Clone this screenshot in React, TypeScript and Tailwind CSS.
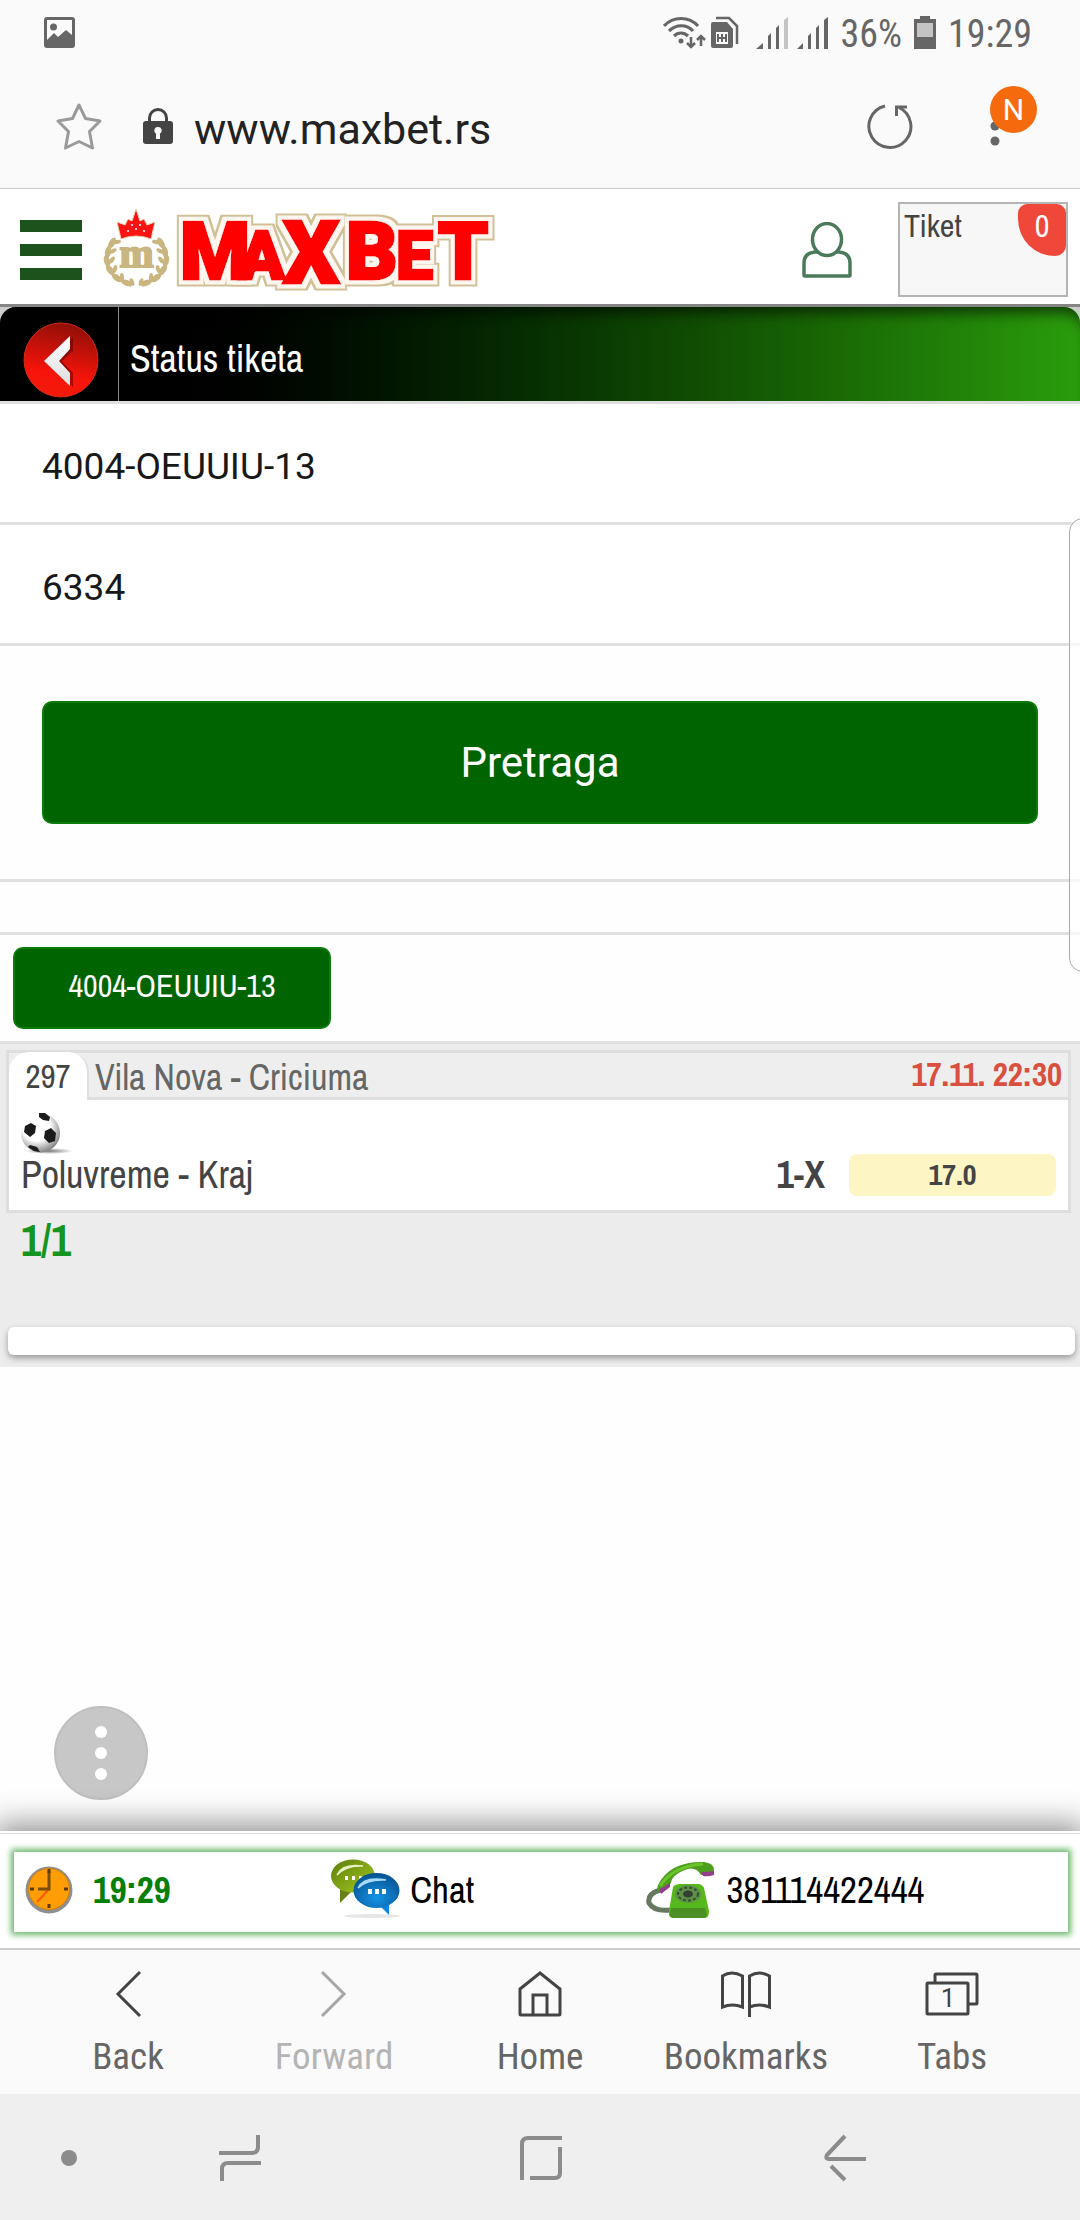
import React, { useState } from "react";

const narrow = "font-['Archivo_Narrow','Liberation_Sans_Narrow','Liberation_Sans',sans-serif]";
const condensed = "font-['Roboto_Condensed','Roboto',sans-serif]";

const StatusBar = () => (
    <div className="flex h-16 items-center justify-between pt-1 pl-[44px] pr-12 text-[#666]">
        <svg width="31" height="31" viewBox="0 0 31 31" className="-mt-1" fill="currentColor">
            <path fillRule="evenodd" d="M3 0h25a3 3 0 0 1 3 3v25a3 3 0 0 1-3 3H3a3 3 0 0 1-3-3V3a3 3 0 0 1 3-3zm0 3v20l7-7 4 4 8-7 6 5V3z" />
            <circle cx="9.500" cy="10" r="3.500" />
        </svg>
        <div className="flex items-center">
            <svg width="166" height="36" viewBox="0 0 166 36" fill="none" stroke="currentColor">
                <g strokeWidth="3.200">
                    <path d="M1 10c9-10 25-10 34 0M6 15c7-7 18-7 24 0M11 20c4-4 10-4 14 0" />
                </g>
                <circle cx="18" cy="25" r="2.500" fill="currentColor" stroke="none" />
                <path strokeWidth="2.500" d="M28 21v10m-4-4 4 4 4-4M38 30V20m-4 4 4-4 4 4" />
                <path strokeWidth="2.500" d="M53 2h13l8 8v18" />
                <path fill="currentColor" stroke="none" fillRule="evenodd" d="M50 6h14l6 7v17a2 2 0 0 1-2 2H50a2 2 0 0 1-2-2V8a2 2 0 0 1 2-2zm3 10v12h12V16z" />
                <path strokeWidth="2" d="M55 18v8m4-8v8m4-8v8m-8-4h8" />
                <path fill="currentColor" stroke="none" d="M93 33h7v-6zM105 33V20l3-3v16zM113 33V12l3-3v24zM134 33h6v-6zM145 33V20l3-3v16zM153 33V12l3-3v24zM161 33V4l4-3v32z" />
                <path fill="#c4c4c4" stroke="none" d="M121 33V4l4-3v32z" />
            </svg>
            <span className={`ml-3 text-[38px] leading-[48px] ${condensed}`}>36%</span>
            <svg width="22" height="33" viewBox="0 0 22 33" className="mx-3 -mt-1">
                <path fill="#666" d="M6 0h10v3h6v30H0V3h6z" />
                <path fill="#c4c4c4" d="M3 7h16v14H3z" />
            </svg>
            <span className={`text-[38px] leading-[48px] ${condensed}`}>19:29</span>
        </div>
    </div>
);

const AddressBar = () => (
    <div className="flex h-[125px] items-center border-b border-[#c8c8c8] pl-14 pr-11 text-[#666]">
        <button aria-label="Bookmark">
            <svg width="46" height="48" viewBox="0 0 46 48" fill="none" stroke="#9a9a9a" strokeWidth="3" strokeLinejoin="round">
                <path d="m23 3 6.500 13.500L44 19 33.500 29.500 36.500 46 23 39.500 9.500 46l3-16.500L2 19l14.500-2.500z" />
            </svg>
        </button>
        <svg width="30" height="36" viewBox="0 0 30 36" className="ml-[41px]">
            <path d="M6.500 14v-4a8.500 8.500 0 0 1 17 0v4" fill="none" stroke="#444" strokeWidth="3" />
            <rect y="13" width="30" height="23" rx="3" fill="#444" />
            <path d="M15 19a3.500 3.500 0 0 1 2 6.500V31h-4v-5.500a3.500 3.500 0 0 1 2-6.500z" fill="#fafafa" />
        </svg>
        <span className="ml-[21px] pt-1.5 text-[43px] leading-[52px] text-[#222] font-['Roboto',sans-serif]">www.maxbet.rs</span>
        <button aria-label="Reload" className="ml-auto">
            <svg width="48" height="48" viewBox="0 0 48 48" fill="none" stroke="currentColor" strokeWidth="3">
                <path d="M19 4a21 21 0 1 0 14 1.500" />
                <path d="M30.500 14V5H41" />
            </svg>
        </button>
        <button aria-label="More options" className="relative ml-[74px]">
            <svg width="48" height="64" viewBox="0 0 48 64" fill="currentColor" className="-mt-4">
                <circle cx="7" cy="40" r="4.500" />
                <circle cx="7" cy="55" r="4.500" />
            </svg>
            <span className="absolute -top-4 left-0.5 size-[47px] rounded-full bg-[#f66a0e] text-center text-[30px] leading-[48px] text-white font-['Roboto',sans-serif]">N</span>
        </button>
    </div>
);

const MaxbetLogo = () => (
    <svg width="400" height="92" viewBox="100 206 400 92" className="overflow-visible">
        <defs>
            <filter id="outline" x="-5%" y="-20%" width="110%" height="140%">
                <feMorphology in="SourceAlpha" operator="dilate" radius="6" result="wide" />
                <feFlood floodColor="#cfc096" />
                <feComposite in2="wide" operator="in" result="gold" />
                <feMorphology in="SourceAlpha" operator="dilate" radius="4" result="mid" />
                <feFlood floodColor="#fff6f0" />
                <feComposite in2="mid" operator="in" result="white" />
                <feMerge>
                    <feMergeNode in="gold" />
                    <feMergeNode in="white" />
                    <feMergeNode in="SourceGraphic" />
                </feMerge>
            </filter>
        </defs>
        <path fill="#fa1414" stroke="#e8cfae" strokeWidth="1" d="m121 241-4-17 8 3 3-6 4 2 4-12 4 12 4-2 3 6 8-3-4 17q-15-6-30 0z" />
        <g fill="#fff">
            <circle cx="128" cy="233" r="1" /><circle cx="136" cy="231" r="1" /><circle cx="144" cy="233" r="1" />
            <circle cx="132" cy="227" r="1" /><circle cx="140" cy="227" r="1" />
        </g>
        <g fill="#c9b57f">
            {[[112, 245, 30], [108, 254, 10], [107, 263, -15], [110, 272, -35], [117, 280, -55], [127, 285, -70]].map(([x, y, r]) => (
                <g key={y}>
                    <ellipse cx={x} cy={y} rx="3" ry="6" transform={`rotate(${r} ${x} ${y})`} />
                    <ellipse cx={x + 5} cy={y - 1} rx="2" ry="4" transform={`rotate(${r + 50} ${x + 5} ${y - 1})`} />
                    <ellipse cx={273 - x} cy={y} rx="3" ry="6" transform={`rotate(${-r} ${273 - x} ${y})`} />
                    <ellipse cx={268 - x} cy={y - 1} rx="2" ry="4" transform={`rotate(${-r - 50} ${268 - x} ${y - 1})`} />
                </g>
            ))}
            <text x="136.500" y="269" textAnchor="middle" fontSize="41" fontWeight="700" stroke="#c9b57f" strokeWidth="2" fontFamily="Liberation Serif, serif">m</text>
        </g>
        <g filter="url(#outline)" fill="#fe0000" stroke="#fe0000" strokeWidth="3" fontWeight="900" fontFamily="Roboto, sans-serif">
            <text y="281">
                <tspan x="180" fontSize="80" fontFamily="Liberation Sans Narrow, Roboto, sans-serif">M</tspan>
                <tspan x="239" fontSize="67">A</tspan>
                <tspan x="283" y="285" fontSize="88">X</tspan>
                <tspan x="346" y="281" fontSize="80">B</tspan>
                <tspan x="396" fontSize="66">E</tspan>
                <tspan x="438" fontSize="80">T</tspan>
            </text>
        </g>
    </svg>
);

const Header = () => (
    <header className="flex h-[118px] items-center border-b-[3px] border-[#858585] bg-white pt-1.5 pr-3 pl-5">
        <button aria-label="Menu" className="flex w-[62px] flex-col gap-3">
            <span className="h-3 bg-[#1c521c]" />
            <span className="h-3 bg-[#1c521c]" />
            <span className="h-3 bg-[#1c521c]" />
        </button>
        <a href="#home" aria-label="MaxBet" className="ml-[18px]">
            <MaxbetLogo />
        </a>
        <button aria-label="Profile" className="ml-auto">
            <svg width="50" height="56" viewBox="0 0 50 56" fill="none" stroke="#4a7a59" strokeWidth="3.500">
                <ellipse cx="25" cy="17.500" rx="14.500" ry="16" />
                <path d="M16 30H13q-11 1-11 11v12q0 1 1 1h44q1 0 1-1V41q0-10-11-11h-3" />
            </svg>
        </button>
        <button className={`ml-[46px] flex h-[95px] w-[170px] items-start justify-between border-2 border-[#b4b4b4] bg-[#f7f7f7] pl-1 text-[32px] leading-[44px] text-[#444] ${narrow}`}>
            Tiket
            <span className="h-[52px] w-12 rounded-[10px_10px_12px_40px] bg-[#ef483a] text-center text-white">0</span>
        </button>
    </header>
);

const TitleBar = () => (
    <div className="border-b-[3px] border-[#dedede] bg-[#ccc]">
        <div className="flex h-[94px] items-stretch rounded-t-2xl bg-linear-to-r from-black from-10% to-[#2a9d0c] shadow-[inset_0_14px_14px_-8px_rgba(0,0,0,0.6)]">
            <button aria-label="Nazad" className="flex w-[119px] items-center justify-center border-r border-[#888] pt-3 pl-1">
                <svg width="76" height="76" viewBox="0 0 76 76">
                    <defs>
                        <linearGradient id="red" x1="0.600" y1="0" x2="0.400" y2="1">
                            <stop offset="0" stopColor="#8d0f08" />
                            <stop offset="0.700" stopColor="#f8140a" />
                            <stop offset="1" stopColor="#f01a0a" />
                        </linearGradient>
                        <linearGradient id="silver" x1="0" y1="0" x2="0" y2="1">
                            <stop offset="0" stopColor="#fff" />
                            <stop offset="1" stopColor="#ddd" />
                        </linearGradient>
                    </defs>
                    <circle cx="38" cy="38" r="37" fill="url(#red)" stroke="#d42a18" strokeWidth="1" />
                    <path d="M50 15v14L39 39l11 12v14L23 40z" fill="#500" opacity="0.500" />
                    <path d="M47 14v13L36 39l11 12v13L21 39z" fill="url(#silver)" />
                </svg>
            </button>
            <h1 className={`self-center pl-[11px] pt-2.5 text-[38px] leading-[44px] text-white ${narrow}`}>Status tiketa</h1>
        </div>
    </div>
);

const SoccerBall = () => (
    <svg width="52" height="42" viewBox="0 0 52 42">
        <defs>
            <radialGradient id="ball" cx="0.400" cy="0.350" r="0.700">
                <stop offset="0.500" stopColor="#fff" />
                <stop offset="1" stopColor="#777" />
            </radialGradient>
            <radialGradient id="ballShadow">
                <stop offset="0" stopColor="#777" />
                <stop offset="1" stopColor="#fff" />
            </radialGradient>
        </defs>
        <ellipse cx="28" cy="39" rx="24" ry="3" fill="url(#ballShadow)" />
        <circle cx="19.500" cy="21" r="19.500" fill="url(#ball)" />
        <path fill="#1c1c1c" d="m18 1 6 0 5 4-1 4-6-1-4-3zM4 14l6-3 5 3-1 7-5 4-6-5zM24 19l6-3 5 5-1 8-6 2-5-5zM9 33l7 2 3 5-6-1-6-4z" />
    </svg>
);

interface TicketMatch {
    id: string;
    teams: string;
    date: string;
    game: string;
    tip: string;
    odds: string;
}

const matches: TicketMatch[] = [
    { id: "297", teams: "Vila Nova - Criciuma", date: "17.11. 22:30", game: "Poluvreme - Kraj", tip: "1-X", odds: "17.0" },
];

const MatchCard: React.FC<{ match: TicketMatch }> = ({ match }) => (
    <div className="border-[3px] border-[#dedede] bg-white text-[#444]">
        <div className="flex h-[47px] items-stretch border-b-[3px] border-[#e0e0e0] bg-[#eee]">
            <span className="-mt-px -mb-[3px] w-20 rounded-t-[20px] border-r-2 border-[#dedede] bg-white pt-2 text-center text-[33px] leading-[33px]">{match.id}</span>
            <span className="pl-1.5 text-[36px] leading-[48px] text-[#666]">{match.teams}</span>
            <span className="ml-auto pr-1.5 text-[33px] leading-[42px] font-bold text-[#d94f40]">{match.date}</span>
        </div>
        <div className="px-3 pt-3 pb-3.5">
            <SoccerBall />
            <div className="flex items-center">
                <span className="text-[38px] leading-[40px]">{match.game}</span>
                <span className="ml-auto text-[38px] leading-[40px] font-bold">{match.tip}</span>
                <span className="ml-6 h-[42px] w-[207px] rounded-lg bg-[#fdf6c4] text-center text-[30px] leading-[40px] font-bold">{match.odds}</span>
            </div>
        </div>
    </div>
);

const ClockIcon = () => (
    <svg width="48" height="48" viewBox="0 0 48 48">
        <circle cx="24" cy="24" r="23.500" fill="#8f8f8f" />
        <circle cx="24" cy="23" r="20.500" fill="#fe9d06" stroke="#d98200" strokeWidth="1" />
        <path d="M24 23 12 36" stroke="#ff5a00" strokeWidth="2" />
        <path d="M24 5v18H13" fill="none" stroke="#7a4d05" strokeWidth="3" />
        <path d="M24 38v4M5 23h4M39 23h4M24 3v4" stroke="#5f3c05" strokeWidth="3" />
    </svg>
);

const ChatIcon = () => (
    <svg width="70" height="62" viewBox="0 0 70 62">
        <defs>
            <linearGradient id="olive" x1="0" y1="0" x2="1" y2="1">
                <stop offset="0" stopColor="#5c7d0c" />
                <stop offset="1" stopColor="#a6cc20" />
            </linearGradient>
            <radialGradient id="blue" cx="0.500" cy="0.700" r="0.700">
                <stop offset="0" stopColor="#1593e6" />
                <stop offset="1" stopColor="#06508f" />
            </radialGradient>
        </defs>
        <ellipse cx="42" cy="57" rx="28" ry="2" fill="#e6e6e6" />
        <path d="M10 30v14l12-12z" fill="#667f18" />
        <ellipse cx="23" cy="17" rx="22" ry="16.500" fill="url(#olive)" />
        <path d="M7 16Q12 4 33 7 16 6 7 16z" fill="#e8f2c0" stroke="#e8f2c0" strokeWidth="1.500" />
        <path d="M15 17h3v4h-3zM22 17h3v4h-3zM29 17h3v3h-3z" fill="#fff" />
        <path d="M49 46l10 10V44z" fill="#0e86dd" />
        <ellipse cx="46.500" cy="31.500" rx="23" ry="17.500" fill="url(#blue)" />
        <path d="M28 29Q34 17 56 21 37 20 28 29z" fill="#a9daf8" stroke="#a9daf8" strokeWidth="1.500" />
        <path d="M38 30h4v5h-4zM45 30h4v5h-4zM52 30h4v5h-4z" fill="#fff" />
    </svg>
);

const PhoneIcon = () => (
    <svg width="70" height="58" viewBox="0 0 70 58">
        <path d="M14 29Q1 33 3 42q5 9 22 7" fill="none" stroke="#66785f" strokeWidth="5" />
        <path d="M27 26q2-3 7-3h18q4 0 6 4l5 23q0 7-4 7H27q-5 0-4-7z" fill="#56b81c" />
        <path d="M25 47h34l2 7q-1 3-3 3H27q-4-1-3-5z" fill="#4c8f22" />
        <ellipse cx="42" cy="33" rx="13" ry="9" fill="#5f8f4b" />
        <ellipse cx="42" cy="33" rx="10" ry="6.500" fill="none" stroke="#2f5427" strokeWidth="2" strokeDasharray="3 2" />
        <ellipse cx="42" cy="33" rx="5" ry="3.500" fill="#333f30" />
        <path d="M12 24Q24 0 58 1q10 1 10 8v5H55Q50 6 42 8 26 13 25 22L14 31q-4-2-2-7z" fill="#4f9f1f" />
        <path d="M14 25Q27 5 57 3" fill="none" stroke="#6cc42b" strokeWidth="3" />
        <path d="M55 11q6 0 13-1v4q-6 2-11 1zM13 28q7-2 11-7v5l-9 7z" fill="#93408c" />
    </svg>
);

const BottomBar = () => (
    <footer className={`relative z-10 border-t-2 border-white bg-white text-[37px] leading-[44px] text-black shadow-[0_0_30px_6px_rgba(0,0,0,0.45)] ${narrow}`}>
        <div className="border-t border-[#ddd] pt-[18px] pr-3 pb-4 pl-3.5">
            <div className="grid h-[80px] grid-cols-[30fr_30fr_40fr] items-center bg-white pb-1 shadow-[0_0_6px_3px_#6db96d]">
                <div className="flex items-center gap-5 pl-[11px]">
                    <ClockIcon />
                    <span className="font-bold text-[#067f06]">19:29</span>
                </div>
                <a href="#chat" className="flex items-center gap-2.5">
                    <ChatIcon />
                    Chat
                </a>
                <a href="tel:381114422444" className="flex items-center gap-2.5">
                    <PhoneIcon />
                    381114422444
                </a>
            </div>
        </div>
    </footer>
);

const navItems = [
    {
        label: "Back",
        icon: <path d="M39 2 17 24l22 22" />,
    },
    {
        label: "Forward",
        icon: <path d="m15 2 22 22-22 22" />,
    },
    {
        label: "Home",
        icon: (
            <>
                <path d="M7 19 27 3l20 16v25q0 1-1 1H8q-1 0-1-1z" />
                <path d="M20 45V25h14v20" />
            </>
        ),
    },
    {
        label: "Bookmarks",
        icon: (
            <path d="M3.500 6q9-6 20 0v31q-10-4-20 0zM30.500 47V6q10-6 20 0v31q-10-4-20 0" />
        ),
    },
    {
        label: "Tabs",
        icon: (
            <>
                <path d="M10 12V5q0-1 1-1h40q1 0 1 1v28q0 1-1 1h-8" />
                <rect x="2" y="13" width="41" height="31" rx="1" />
                <text x="23" y="37" textAnchor="middle" fontSize="26" fill="#444" stroke="none" fontFamily="Roboto, sans-serif">1</text>
            </>
        ),
    },
];

const BrowserNav = () => (
    <nav className={`relative z-10 grid grid-cols-5 border-t-2 border-[#ccc] bg-[#fafafa] px-[25px] pt-5 text-[37px] leading-[44px] text-[#666] ${condensed}`}>
        {navItems.map(({ label, icon }) => (
            <button key={label} disabled={label === "Forward"} className="flex flex-col items-center gap-4 pb-[15px] disabled:text-[#b4b4b4]">
                <svg width="54" height="49" viewBox="0 0 54 49" fill="none" stroke={label === "Forward" ? "#a6a6a6" : "#444"} strokeWidth="3">
                    {icon}
                </svg>
                {label}
            </button>
        ))}
    </nav>
);

const SystemNav = () => (
    <div className="flex h-[126px] items-center bg-[#efefef] pt-px pl-[61px]">
        <span className="size-4 rounded-full bg-[#8c8c8c]" />
        <button aria-label="Recents" className="ml-[142px]">
            <svg width="42" height="48" viewBox="0 0 42 48" fill="none" stroke="#8c8c8c" strokeWidth="4">
                <path d="M0 19h33q6 0 6-6V1M42 29H9q-6 0-6 6v12" />
            </svg>
        </button>
        <button aria-label="Home screen" className="ml-[259px]">
            <svg width="42" height="48" viewBox="0 0 42 48" fill="none" stroke="#8c8c8c" strokeWidth="4">
                <path d="M2 46V10q0-6 6-6h34M40 13v26q0 5-5 5H10" />
            </svg>
        </button>
        <button aria-label="Go back" className="ml-[262px]">
            <svg width="42" height="48" viewBox="0 0 42 48" fill="none" stroke="#8c8c8c" strokeWidth="4">
                <path d="M21 2 3 21q-2 4 2 4h37M7 32l14 14" />
            </svg>
        </button>
    </div>
);

const App: React.FC = () => {
    const [ticketCode, setTicketCode] = useState("4004-OEUUIU-13");
    const [pin, setPin] = useState("6334");

    const inputClass = "block h-[121px] w-full border-b-[3px] border-[#e0e0e0] bg-white px-[42px] pt-1.5 text-[37px] text-[#181818] outline-none font-['Roboto',sans-serif]";

    return (
        <div className="flex min-h-screen flex-col overflow-x-hidden bg-[#fafafa]">
            <StatusBar />
            <AddressBar />
            <Header />
            <TitleBar />
            <main className="relative flex flex-1 flex-col bg-[#fefefe]">
                <form onSubmit={(e) => e.preventDefault()}>
                    <input aria-label="Šifra tiketa" className={inputClass} value={ticketCode} onChange={(e) => setTicketCode(e.target.value)} />
                    <input aria-label="PIN" className={inputClass} value={pin} onChange={(e) => setPin(e.target.value)} />
                    <div className="border-b-[3px] border-[#e0e0e0] px-[42px] py-[55px]">
                        <button className="block h-[123px] w-full rounded-[10px] border-2 border-[#0b7c0b] bg-[#006400] text-[42px] text-white font-['Roboto',sans-serif]">Pretraga</button>
                    </div>
                </form>
                <div className={`mt-[50px] border-y-[3px] border-[#e0e0e0] px-[13px] py-3 ${narrow}`}>
                    <button className="block h-[82px] w-[318px] rounded-[10px] border-2 border-[#0b7c0b] bg-[#006400] pb-1 text-[32px] text-white">{ticketCode}</button>
                </div>
                <section className={`bg-[#ececec] pt-1.5 pr-[9px] pb-3 pl-1.5 ${narrow}`}>
                    {matches.map((match) => (
                        <MatchCard key={match.id} match={match} />
                    ))}
                    <p className="pl-[15px] text-[44px] leading-[54px] font-bold text-[#159422]">1/1</p>
                    <div className="mt-[60px] -mr-1 ml-0.5 h-7 rounded-md bg-white shadow-[0_3px_6px_rgba(0,0,0,0.35)]" />
                </section>
                <button aria-label="More" className="absolute bottom-[31px] left-[54px] flex size-[94px] flex-col items-center justify-center gap-[9px] rounded-full border-2 border-[#bfbfbf] bg-[#c7c7c7]">
                    <span className="size-3 rounded-full bg-white" />
                    <span className="size-3 rounded-full bg-white" />
                    <span className="size-3 rounded-full bg-white" />
                </button>
                <div className="absolute top-[114px] -right-2 h-[454px] w-[19px] rounded-l-[14px] border border-[#aaa] bg-white/70" />
            </main>
            <BottomBar />
            <BrowserNav />
            <SystemNav />
        </div>
    );
};

export default App;
